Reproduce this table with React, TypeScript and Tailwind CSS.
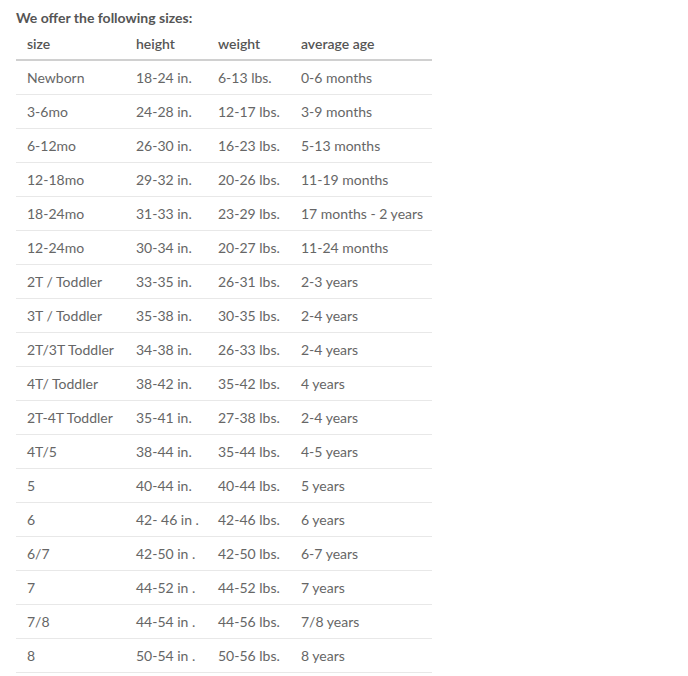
import React from "react";

const rows: [string, string, string, string][] = [
  ["Newborn", "18-24 in.", "6-13 lbs.", "0-6 months"],
  ["3-6mo", "24-28 in.", "12-17 lbs.", "3-9 months"],
  ["6-12mo", "26-30 in.", "16-23 lbs.", "5-13 months"],
  ["12-18mo", "29-32 in.", "20-26 lbs.", "11-19 months"],
  ["18-24mo", "31-33 in.", "23-29 lbs.", "17 months - 2 years"],
  ["12-24mo", "30-34 in.", "20-27 lbs.", "11-24 months"],
  ["2T / Toddler", "33-35 in.", "26-31 lbs.", "2-3 years"],
  ["3T / Toddler", "35-38 in.", "30-35 lbs.", "2-4 years"],
  ["2T/3T Toddler", "34-38 in.", "26-33 lbs.", "2-4 years"],
  ["4T/ Toddler", "38-42 in.", "35-42 lbs.", "4 years"],
  ["2T-4T Toddler", "35-41 in.", "27-38 lbs.", "2-4 years"],
  ["4T/5", "38-44 in.", "35-44 lbs.", "4-5 years"],
  ["5", "40-44 in.", "40-44 lbs.", "5 years"],
  ["6", "42- 46 in .", "42-46 lbs.", "6 years"],
  ["6/7", "42-50 in .", "42-50 lbs.", "6-7 years"],
  ["7", "44-52 in .", "44-52 lbs.", "7 years"],
  ["7/8", "44-54 in .", "44-56 lbs.", "7/8 years"],
  ["8", "50-54 in .", "50-56 lbs.", "8 years"],
];

export default function App() {
  return (
    <div
      className="w-[688px] h-[676px] bg-white pl-[16px] pt-[7px] overflow-hidden"
      style={{ fontFamily: "Lato, 'Open Sans', sans-serif" }}
    >
      <div className="text-[14px] leading-[21px] font-bold text-[#555]">
        We offer the following sizes:
      </div>
      <div className="w-[416px]">
        <div className="grid grid-cols-[109px_82px_83px_142px] h-[33px] items-center border-b-2 border-[#d0d0d0] text-[14px] font-semibold text-[#555]">
          <div className="pl-[11px]">size</div>
          <div className="pl-[11px]">height</div>
          <div className="pl-[11px]">weight</div>
          <div className="pl-[11px]">average age</div>
        </div>
        {rows.map((r, i) => (
          <div
            key={i}
            className="grid grid-cols-[109px_82px_83px_142px] h-[34px] items-center border-b border-[#e8e8e8] text-[14px] text-[#666]"
          >
            {r.map((c, j) => (
              <div key={j} className="pl-[11px] whitespace-nowrap">
                {c}
              </div>
            ))}
          </div>
        ))}
      </div>
    </div>
  );
}
